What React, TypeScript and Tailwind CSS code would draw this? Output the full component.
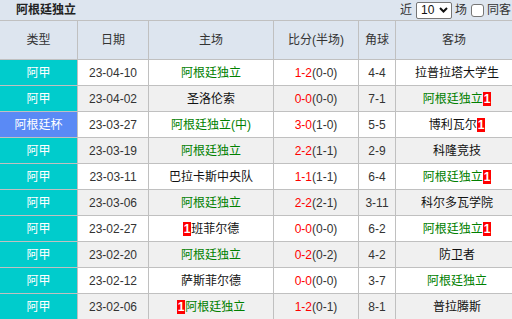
import React from "react";

type Row = {
  type: string;
  cup?: boolean;
  date: string;
  home: string;
  homeGreen?: boolean;
  homeBadge?: "left" | "right";
  ft: string;
  ht: string;
  corner: string;
  away: string;
  awayGreen?: boolean;
  awayBadge?: "left" | "right";
};

const rows: Row[] = [
  { type: "阿甲", date: "23-04-10", home: "阿根廷独立", homeGreen: true, ft: "1-2", ht: "(0-0)", corner: "4-4", away: "拉普拉塔大学生" },
  { type: "阿甲", date: "23-04-02", home: "圣洛伦索", ft: "0-0", ht: "(0-0)", corner: "7-1", away: "阿根廷独立", awayGreen: true, awayBadge: "right" },
  { type: "阿根廷杯", cup: true, date: "23-03-27", home: "阿根廷独立(中)", homeGreen: true, ft: "3-0", ht: "(1-0)", corner: "5-5", away: "博利瓦尔", awayBadge: "right" },
  { type: "阿甲", date: "23-03-19", home: "阿根廷独立", homeGreen: true, ft: "2-2", ht: "(1-1)", corner: "2-9", away: "科隆竞技" },
  { type: "阿甲", date: "23-03-11", home: "巴拉卡斯中央队", ft: "1-1", ht: "(1-1)", corner: "6-4", away: "阿根廷独立", awayGreen: true, awayBadge: "right" },
  { type: "阿甲", date: "23-03-06", home: "阿根廷独立", homeGreen: true, ft: "2-2", ht: "(2-1)", corner: "3-11", away: "科尔多瓦学院" },
  { type: "阿甲", date: "23-02-27", home: "班菲尔德", homeBadge: "left", ft: "0-0", ht: "(0-0)", corner: "6-2", away: "阿根廷独立", awayGreen: true, awayBadge: "right" },
  { type: "阿甲", date: "23-02-20", home: "阿根廷独立", homeGreen: true, ft: "0-2", ht: "(0-2)", corner: "4-2", away: "防卫者" },
  { type: "阿甲", date: "23-02-12", home: "萨斯菲尔德", ft: "0-0", ht: "(0-0)", corner: "3-7", away: "阿根廷独立", awayGreen: true },
  { type: "阿甲", date: "23-02-06", home: "阿根廷独立", homeGreen: true, homeBadge: "left", ft: "1-2", ht: "(0-1)", corner: "8-1", away: "普拉腾斯" },
];

function Badge() {
  return <span className="inline-block bg-[#ff0000] px-[1px] text-[12px] font-bold leading-[14px] text-white">1</span>;
}

function Team({ name, green, badge }: { name: string; green?: boolean; badge?: "left" | "right" }) {
  return (
    <span className={green ? "text-[#008000]" : "text-[#111]"}>
      {badge === "left" ? <Badge /> : null}
      {name}
      {badge === "right" ? <Badge /> : null}
    </span>
  );
}

export default function App() {
  const font = { fontFamily: '"Liberation Sans", "Noto Sans CJK SC", sans-serif' };
  return (
    <div className="w-[512px] h-[319px] overflow-hidden bg-white text-[12px] text-[#333]" style={font}>
      <div className="flex h-[21px] items-center justify-between border-b border-[#c0c0c0] bg-[#dde5ef] pl-[16px]">
        <div className="font-bold text-[#222]">阿根廷独立</div>
        <div className="flex items-center whitespace-nowrap text-[#333]">
          <span>近</span>
          <div className="ml-[4px] flex h-[17px] w-[36px] items-center justify-between rounded-[2px] border border-[#767676] bg-white pl-[4px] pr-[3px] text-[#111]">
            <span>10</span>
            <svg width="9" height="6" viewBox="0 0 9 6">
              <path d="M1 1 L4.5 4.5 L8 1" fill="none" stroke="#111" strokeWidth="2" />
            </svg>
          </div>
          <span className="ml-[3px]">场</span>
          <span className="ml-[4px] inline-block h-[13px] w-[13px] rounded-[3px] border border-[#767676] bg-white" />
          <span className="ml-[3px] mr-[1px]">同客</span>
        </div>
      </div>
      <div className="flex h-[39px] items-center border-b border-[#c0c0c0] bg-[#dde5ef] text-[#333]">
        <div className="flex h-full w-[78px] items-center justify-center border-r border-[#c0c0c0]">类型</div>
        <div className="flex h-full w-[71px] items-center justify-center border-r border-[#c0c0c0]">日期</div>
        <div className="flex h-full w-[125px] items-center justify-center border-r border-[#c0c0c0]">主场</div>
        <div className="flex h-full w-[85px] items-center justify-center border-r border-[#c0c0c0]">比分(半场)</div>
        <div className="flex h-full w-[37px] items-center justify-center border-r border-[#c0c0c0]">角球</div>
        <div className="flex h-full flex-1 items-center justify-center">客场</div>
      </div>
      {rows.map((r, i) => (
        <div key={i} className={`flex h-[26px] items-center border-b border-[#c0c0c0] ${i % 2 === 0 ? "bg-white" : "bg-[#f0f0f0]"}`}>
          <div className={`flex h-full w-[78px] items-center justify-center border-r border-[#c0c0c0] text-white ${r.cup ? "bg-[#5a8af5]" : "bg-[#00cccc]"}`}>{r.type}</div>
          <div className="flex h-full w-[71px] items-center justify-center border-r border-[#c0c0c0] text-[#333]">{r.date}</div>
          <div className="flex h-full w-[125px] items-center justify-center border-r border-[#c0c0c0]">
            <Team name={r.home} green={r.homeGreen} badge={r.homeBadge} />
          </div>
          <div className="flex h-full w-[85px] items-center justify-center border-r border-[#c0c0c0]">
            <span className="text-[#ff0000]">{r.ft}</span>
            <span className="text-[#333]">{r.ht}</span>
          </div>
          <div className="flex h-full w-[37px] items-center justify-center border-r border-[#c0c0c0] text-[#333]">{r.corner}</div>
          <div className="flex h-full flex-1 items-center justify-center pl-[6px]">
            <Team name={r.away} green={r.awayGreen} badge={r.awayBadge} />
          </div>
        </div>
      ))}
    </div>
  );
}
